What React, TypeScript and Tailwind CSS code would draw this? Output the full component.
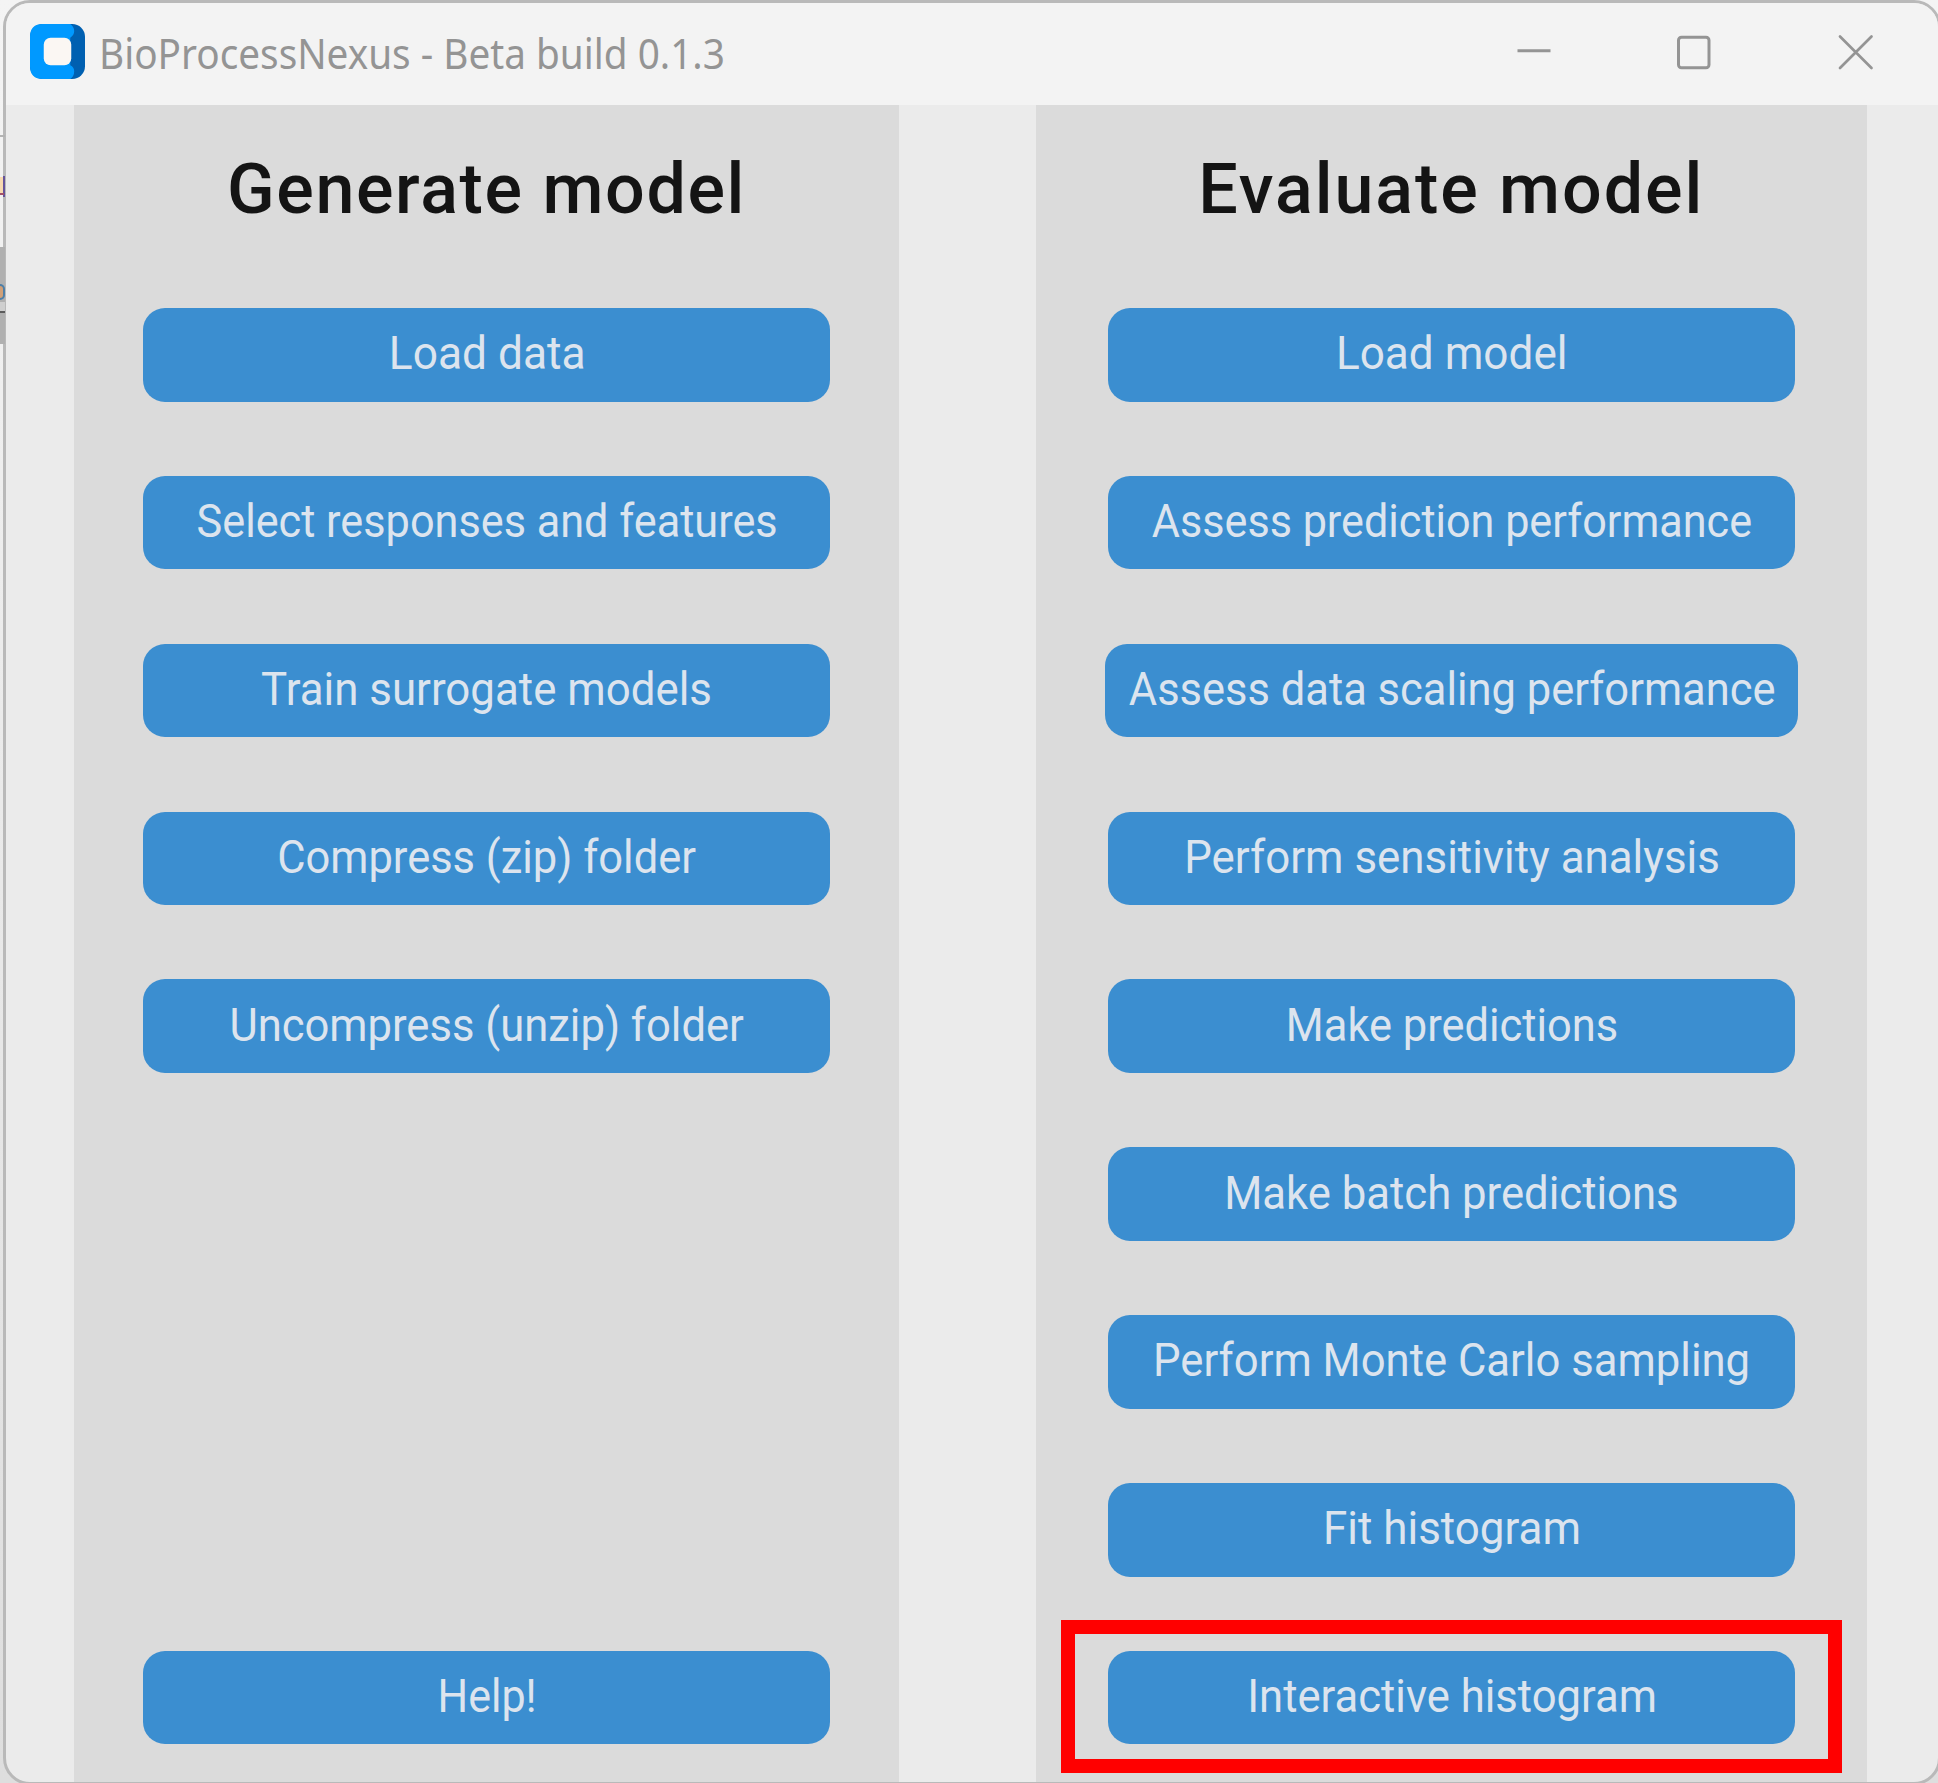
import type { ReactNode } from "react";

type Action = { label: string; stretch: string; width?: string };

const generateActions: Action[] = [
  { label: "Load data", stretch: "scale-x-[0.963]" },
  { label: "Select responses and features", stretch: "scale-x-[0.94]" },
  { label: "Train surrogate models", stretch: "scale-x-[0.953]" },
  { label: "Compress (zip) folder", stretch: "scale-x-[0.945]" },
  { label: "Uncompress (unzip) folder", stretch: "scale-x-[0.947]" },
];

const evaluateActions: Action[] = [
  { label: "Load model", stretch: "scale-x-[0.959]" },
  { label: "Assess prediction performance", stretch: "scale-x-[0.938]" },
  { label: "Assess data scaling performance", stretch: "scale-x-[0.945]", width: "w-[693.4px]" },
  { label: "Perform sensitivity analysis", stretch: "scale-x-[0.953]" },
  { label: "Make predictions", stretch: "scale-x-[0.944]" },
  { label: "Make batch predictions", stretch: "scale-x-[0.949]" },
  { label: "Perform Monte Carlo sampling", stretch: "scale-x-[0.949]" },
  { label: "Fit histogram", stretch: "scale-x-[0.955]" },
];

function ActionButton({ label, stretch, width = "w-[687px]" }: Action) {
  return (
    <button
      className={`${width} flex h-[93.6px] shrink-0 items-center justify-center rounded-[22px] bg-[#3b8ed0] pb-[3px] pl-[1px] text-[46px] leading-none whitespace-nowrap text-[#dce4ee]`}
    >
      <span className={`${stretch} inline-block`}>{label}</span>
    </button>
  );
}

function Panel({ title, className, tracking, children }: { title: string; className: string; tracking: string; children: ReactNode }) {
  return (
    <section className={`${className} flex h-full shrink-0 flex-col items-center bg-[#dbdbdb]`}>
      <h1 className={`${tracking} mt-[44px] mb-[79px] flex h-[80px] shrink-0 items-center text-[70px] leading-none font-medium whitespace-nowrap text-[#141414]`}>
        {title}
      </h1>
      <div className="flex flex-col items-center gap-[74.25px]">{children}</div>
    </section>
  );
}

function AppLogo() {
  return (
    <svg className="ml-[24px] size-[55px] shrink-0" viewBox="0 0 56 56">
      <rect width="56" height="56" rx="13" fill="#0060b1" />
      <path
        d="M13 0H41Q45 3 45 7Q45 11 41 14V42Q45 44 45 48Q45 53 41 56H13Q0 56 0 43V13Q0 0 13 0Z"
        fill="#0099ff"
      />
      <rect x="14" y="14" width="28" height="28" rx="7" fill="#fbf7f3" />
    </svg>
  );
}

function TitleBar() {
  return (
    <header className="flex h-[102px] shrink-0 items-start bg-[#f3f3f3] pt-[21px] text-[#949494]">
      <AppLogo />
      <span className="ml-[14px] inline-block h-[58px] origin-left scale-x-[0.922] font-['Noto_Sans'] text-[42px] leading-[58px] whitespace-nowrap">
        BioProcessNexus - Beta build 0.1.3
      </span>
      <svg className="ml-auto mt-[10px] mr-[64px] h-[40px] w-[360px] shrink-0" viewBox="0 0 360 40" fill="none" stroke="#949494" strokeWidth="3">
        <path d="M3.5 16.7H36.5" />
        <rect x="164.5" y="3.2" width="30.5" height="30.5" rx="3" />
        <path d="M326 2.5L357.5 34M357.5 2.5L326 34" strokeLinecap="round" strokeWidth="2.7" />
      </svg>
    </header>
  );
}

/* Sliver of the window that lies behind, seen along the left edge. */
function BackgroundSliver() {
  return (
    <div className="absolute top-0 left-0 h-[360px] w-[5px]">
      <div className="absolute top-[135px] left-0 h-[2px] w-[5px] bg-[#b3b3b3]" />
      <div className="absolute top-[177px] left-0 h-[16px] w-[3px] bg-[#f8d9b0]" />
      <div className="absolute top-[176px] left-[3px] h-[21px] w-[2px] bg-[#65549b]" />
      <div className="absolute top-[193px] left-0 h-[2px] w-[4px] bg-[#a0506a]" />
      <div className="absolute top-[247px] left-0 h-[97px] w-[5px] bg-[#b0b0b0]" />
      <div className="absolute top-[284px] left-0 h-[16px] w-[5px] rounded-r-full border-2 border-l-0 border-[#4d7fa8] bg-[#d0a078]" />
      <div className="absolute top-[302px] left-0 h-[9px] w-[5px] bg-[#cfcfcf]" />
      <div className="absolute top-[311px] left-0 h-[2px] w-[5px] bg-[#5c5c5c]" />
    </div>
  );
}

export default function App() {
  return (
    <div className="relative h-[1783px] w-[1938px] overflow-hidden bg-[#e6e6e6] bg-linear-to-b from-[#f4f4f4] to-[#dedede] font-[Roboto,sans-serif]">
      <div className="ml-[3px] flex h-[1785px] w-[1938px] flex-col overflow-hidden rounded-[27px] border-[3px] border-[#b9b9b9] bg-[#ebebeb]">
        <TitleBar />
        <main className="flex min-h-0 flex-1 pl-[68px]">
          <Panel title="Generate model" className="w-[825px]" tracking="tracking-[1.6px]">
            {generateActions.map((action) => (
              <ActionButton key={action.label} {...action} />
            ))}
            <div className="mt-[503.5px]">
              <ActionButton label="Help!" stretch="scale-x-[0.935]" />
            </div>
          </Panel>
          <Panel title="Evaluate model" className="ml-[137px] w-[830.5px]" tracking="tracking-[1.95px]">
            {evaluateActions.map((action) => (
              <ActionButton key={action.label} {...action} />
            ))}
            <div className="relative">
              <ActionButton label="Interactive histogram" stretch="scale-x-[0.948]" />
              <div className="absolute -top-[31px] -left-[46.75px] h-[153px] w-[781px] border-[14px] border-[#ff0000]" />
            </div>
          </Panel>
        </main>
      </div>
      <BackgroundSliver />
    </div>
  );
}
